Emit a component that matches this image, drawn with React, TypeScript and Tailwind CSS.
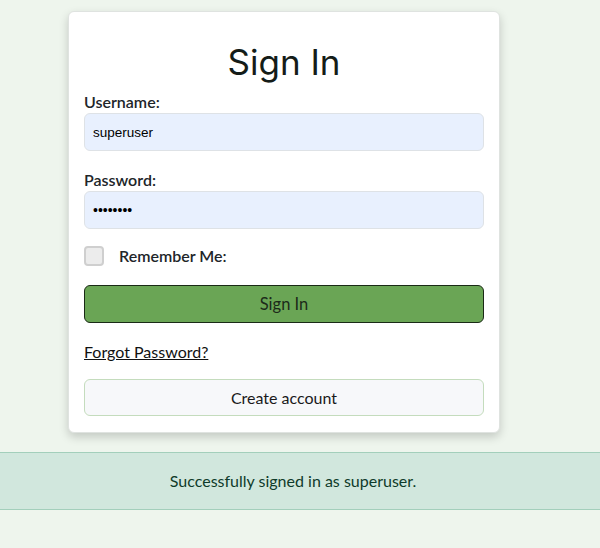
export default function App() {
  return (
    <div className="min-h-[548px] w-[600px] bg-[#eef5ed] pt-[11px]" style={{ fontFamily: "Lato, 'Open Sans', sans-serif" }}>
      {/* Card */}
      <div className="ml-[68px] w-[432px] rounded-[6px] border border-[#dfe3e0] bg-white px-[15px] pb-4 pt-[30px] shadow-[0_4px_10px_rgba(0,0,0,0.18)]">
        <h1 className="text-center text-[35px] leading-[40px] text-[#141c18]" style={{ fontFamily: "Inter, 'Open Sans', sans-serif" }}>
          Sign In
        </h1>
        <form className="mt-[10px]" onSubmit={(e) => e.preventDefault()}>
          <label className="block text-[16px] font-semibold leading-[20px] text-[#212529]">Username:</label>
          <input
            type="text"
            defaultValue="superuser"
            className="mt-[1px] h-[38px] w-full rounded-[6px] border border-[#dee2e6] bg-[#e8f0fe] px-[8px] text-[13.5px] text-black outline-none"
            style={{ fontFamily: "'Liberation Sans', Arial, sans-serif" }}
          />
          <label className="mt-[19px] block text-[16px] font-semibold leading-[20px] text-[#212529]">Password:</label>
          <input
            type="password"
            defaultValue="password"
            className="mt-[1px] h-[38px] w-full rounded-[6px] border border-[#dee2e6] bg-[#e8f0fe] px-[8px] text-[14px] text-black outline-none"
            style={{ fontFamily: "'Liberation Sans', Arial, sans-serif" }}
          />
          <div className="mt-[15px] flex items-center">
            <span className="h-[20px] w-[20px] rounded-[4px] border-2 border-[#cfcfcf] bg-[#ececec]" />
            <span className="ml-[15px] text-[16px] font-semibold text-[#212529]">Remember Me:</span>
          </div>
          <button
            type="submit"
            className="mt-[17px] h-[38px] w-full rounded-[6px] border border-[#1a2a16] bg-[#6aa555] text-[16.5px] text-[#1c2a1a]"
          >
            Sign In
          </button>
          <div className="mt-[18px] leading-[22px]">
            <a href="#" className="text-[16px] text-[#111] underline">Forgot Password?</a>
          </div>
          <button
            type="button"
            className="mt-[16px] h-[37px] w-full rounded-[6px] border border-[#c4dcbd] bg-[#f7f8fa] text-[16px] text-[#1a1a1a]"
          >
            Create account
          </button>
        </form>
      </div>

      {/* Alert banner */}
      <div className="mt-[19px] flex h-[58px] items-center justify-center border-y border-[#a3cfbb] bg-[#d1e7dd] pr-[14px] text-[16px] text-[#0f3b2a]">
        Successfully signed in as superuser.
      </div>
    </div>
  );
}
